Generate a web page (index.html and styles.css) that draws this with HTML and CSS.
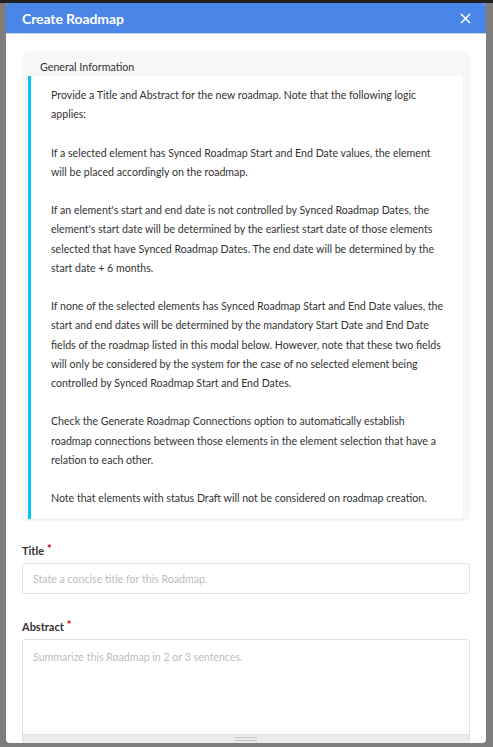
FILE: index.html
```html
<!DOCTYPE html>
<html lang="en">
<head>
<meta charset="utf-8">
<title>Create Roadmap</title>
<link rel="stylesheet" href="styles.css">
</head>
<body>
<div class="page">
  <div class="modal">
    <div class="modal-header">
      <h1 class="modal-title">Create Roadmap</h1>
      <button class="close" aria-label="Close">
        <svg width="11" height="11" viewBox="0 0 11 11"><path d="M1 1 L10 10 M10 1 L1 10" stroke="#fff" stroke-width="1.5" fill="none"/></svg>
      </button>
    </div>
    <div class="modal-body">
      <section class="info-card">
        <div class="info-heading">General Information</div>
        <div class="info-box">
          <p>Provide a Title and Abstract for the new roadmap. Note that the following logic applies:</p>
          <p>If a selected element has Synced Roadmap Start and End Date values, the element will be placed accordingly on the roadmap.</p>
          <p>If an element's start and end date is not controlled by Synced Roadmap Dates, the element's start date will be determined by the earliest start date of those elements selected that have Synced Roadmap Dates. The end date will be determined by the start date + 6 months.</p>
          <p>If none of the selected elements has Synced Roadmap Start and End Date values, the start and end dates will be determined by the mandatory Start Date and End Date fields of the roadmap listed in this modal below. However, note that these two fields will only be considered by the system for the case of no selected element being controlled by Synced Roadmap Start and End Dates.</p>
          <p>Check the Generate Roadmap Connections option to automatically establish roadmap connections between those elements in the element selection that have a relation to each other.</p>
          <p>Note that elements with status Draft will not be considered on roadmap creation.</p>
        </div>
      </section>

      <div class="field">
        <label class="field-label" for="title">Title <span class="req">*</span></label>
        <input class="input" id="title" type="text" placeholder="State a concise title for this Roadmap.">
      </div>

      <div class="field field-abstract">
        <label class="field-label" for="abstract">Abstract <span class="req">*</span></label>
        <div class="textarea-wrap">
          <textarea class="textarea" id="abstract" placeholder="Summarize this Roadmap in 2 or 3 sentences."></textarea>
          <div class="grippie"><span class="grip"></span></div>
        </div>
      </div>
    </div>
  </div>
</div>
</body>
</html>
```

FILE: styles.css
```css
* { box-sizing: border-box; }

html, body {
  margin: 0;
  padding: 0;
  height: 100%;
}

body {
  background: linear-gradient(#1f1f1f 0 3px, #7d7d7d 3px);
  font-family: Lato, "Noto Sans", sans-serif;
  color: #333;
  overflow: hidden;
}

.page {
  padding: 3px 7px 0 6px;
  height: 747px;
}

.modal {
  width: 480px;
  height: 740px;
  background: #fff;
  border-radius: 4px;
  overflow: hidden;
  display: flex;
  flex-direction: column;
}

.modal-header {
  height: 31px;
  flex: 0 0 31px;
  background: #4a86e8;
  border-bottom: 1px solid #c9d3e0;
  display: flex;
  align-items: center;
  justify-content: space-between;
  padding: 0 15px 0 16px;
}

.modal-title {
  margin: 0;
  font-size: 14px;
  font-weight: 700;
  color: #fff;
  letter-spacing: -0.1px;
}

.close {
  background: none;
  border: 0;
  padding: 0;
  width: 11px;
  height: 11px;
  display: flex;
  cursor: pointer;
}

.modal-body {
  padding: 17px 16px 0 16px;
  flex: 1;
  overflow: hidden;
}

.info-card {
  background: #f7f7f7;
  border-radius: 6px;
  padding: 0 7px 2px 6px;
}

.info-heading {
  font-size: 10.7px;
  line-height: 25px;
  height: 25px;
  padding: 3px 0 0 12px;
  color: #333;
}

.info-box {
  background: #fff;
  border-left: 3px solid #00c8ff;
  border-radius: 0 3px 3px 0;
  padding: 10px 17px 11px 20px;
  box-shadow: 0 1px 2px rgba(0,0,0,0.06);
}

.info-box p {
  margin: 0 0 19.2px;
  font-size: 10.6px;
  line-height: 19.2px;
  color: #333;
}

.info-box p:last-child { margin-bottom: 0; }

.field { margin-top: 21px; }
.field-abstract { margin-top: 24px; }

.field-label {
  display: block;
  font-size: 11px;
  font-weight: 700;
  line-height: 18px;
  color: #333;
  margin-bottom: 3px;
}

.req {
  color: #d40000;
  font-size: 12px;
  position: relative;
  top: -2px;
}

.input {
  display: block;
  width: 100%;
  height: 31px;
  border: 1px solid #dbe3ec;
  border-radius: 3px;
  padding: 0 10px;
  font: inherit;
  font-size: 10.6px;
  color: #333;
  outline: none;
}

.input::placeholder,
.textarea::placeholder {
  color: #bdbdbd;
}

.textarea-wrap {
  border: 1px solid #dbe3ec;
  border-radius: 3px;
  overflow: hidden;
}

.textarea {
  display: block;
  width: 100%;
  height: 94px;
  border: 0;
  resize: none;
  padding: 8px 10px;
  font: inherit;
  font-size: 10.6px;
  line-height: 18px;
  color: #333;
  outline: none;
}

.grippie {
  height: 9px;
  background: #ececec;
  border-top: 1px solid #dbe3ec;
  display: flex;
  justify-content: center;
  align-items: center;
}

.grip {
  width: 22px;
  height: 4px;
  border-top: 1px solid #c4c4c4;
  border-bottom: 1px solid #c4c4c4;
}
```
